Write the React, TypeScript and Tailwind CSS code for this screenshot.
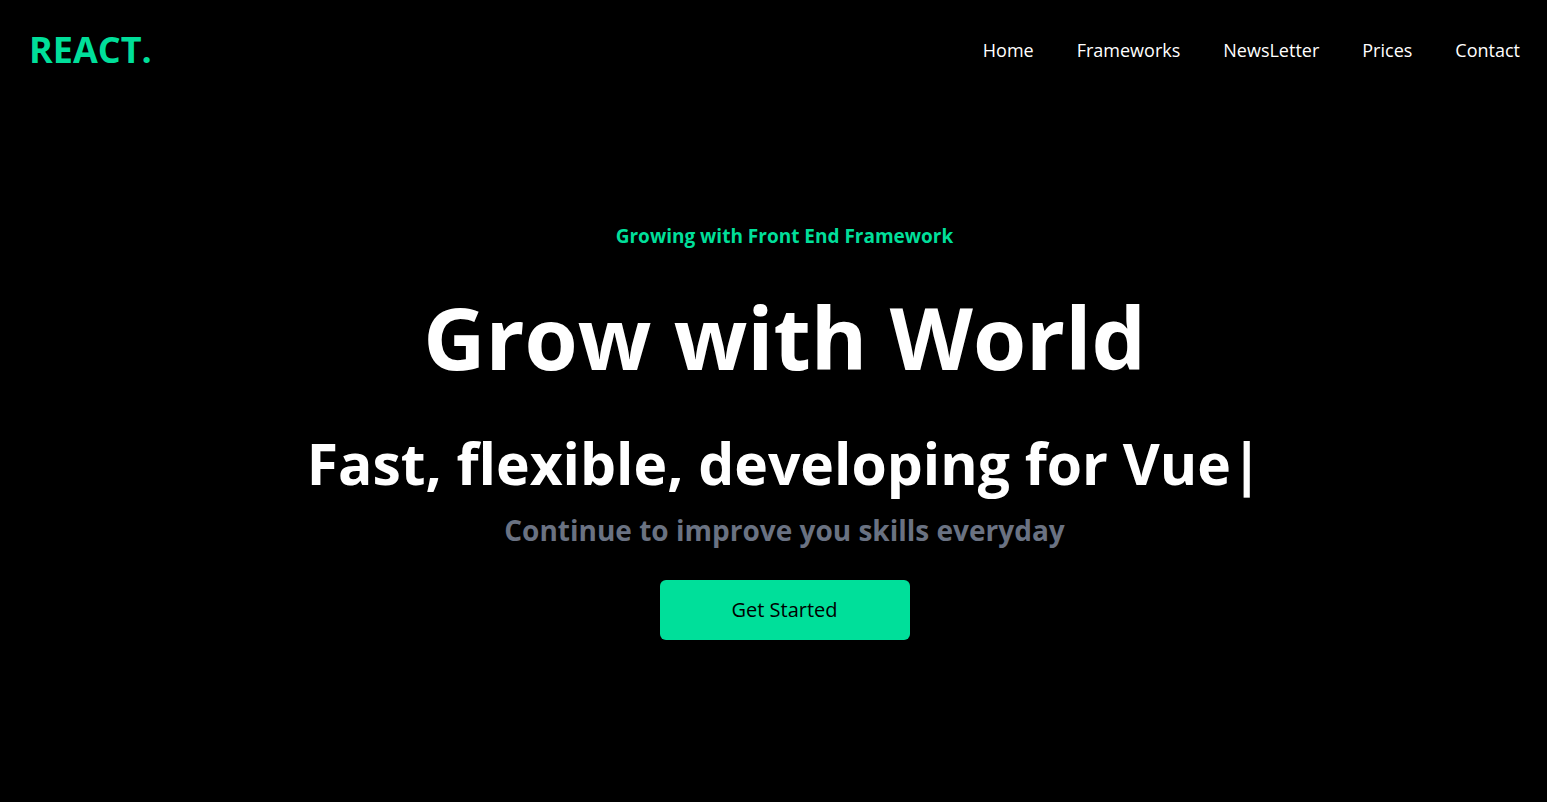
import React from 'react';

const links = ['Home', 'Frameworks', 'NewsLetter', 'Prices', 'Contact'];

const App: React.FC = () => {
  return (
    <div className="min-h-[802px] bg-black text-white font-['Open_Sans',sans-serif]">
      {/* Navbar */}
      <nav className="flex justify-between items-center h-24 pt-1 pl-[29px] pr-[27px]">
        <h1 className="text-4xl font-bold text-[#00df9a]">REACT.</h1>
        <ul className="flex items-center gap-[43px] text-lg">
          {links.map((l) => (
            <li key={l} className="cursor-pointer">{l}</li>
          ))}
        </ul>
      </nav>

      {/* Hero */}
      <div className="flex flex-col items-center text-center pl-[22px]">
        <p className="mt-[126px] text-[19px] leading-7 font-bold text-[#00df9a]">Growing with Front End Framework</p>
        <h1 className="mt-[44px] text-[86px] leading-none font-bold">Grow with World</h1>
        <div className="mt-[55px] flex justify-center items-center">
          <p className="text-[57px] leading-none font-bold">Fast, flexible, developing for Vue|</p>
        </div>
        <p className="mt-[20px] text-[28px] leading-9 font-bold text-gray-500">Continue to improve you skills everyday</p>
        <button className="mt-[32px] w-[250px] h-[60px] rounded-md bg-[#00df9a] text-black text-xl font-medium">
          Get Started
        </button>
      </div>
    </div>
  );
};

export default App;
